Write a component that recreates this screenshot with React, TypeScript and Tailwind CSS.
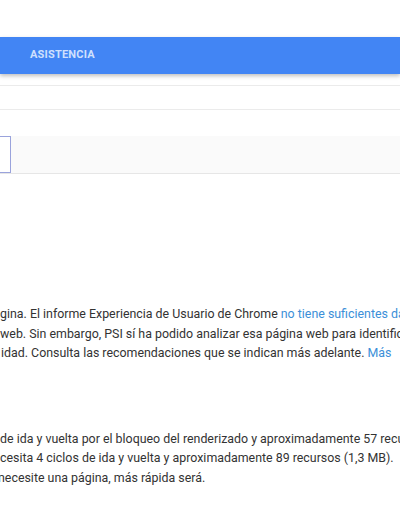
import React from "react";

const link = "text-[#3c8fd8]";

export default function App() {
  return (
    <div className="w-[400px] h-[516px] overflow-hidden bg-white font-['Roboto',sans-serif] text-[#333]">
      <div className="h-[37px]" />
      <div className="h-[37px] bg-[#4285f4] shadow-[0_2px_4px_rgba(0,0,0,0.25)] flex items-center pl-[30px]">
        <span className="text-[11px] font-bold text-[#cfe0fd] tracking-[0.2px]">ASISTENCIA</span>
      </div>
      <div className="h-[11px]" />
      <div className="h-[25px] border-t border-b border-[#ebebeb]" />
      <div className="h-[26px]" />
      <div className="h-[38px] flex bg-[#fafafa] border-b border-[#e6e6e6]">
        <div className="w-[11px] bg-white border-t border-r border-b border-[#9aa3dc]" />
      </div>
      <div className="h-[130px]" />
      <div className="text-[12.4px] leading-[19.5px] whitespace-nowrap">
        <div>
          gina. El informe Experiencia de Usuario de Chrome{" "}
          <span className={link}>no tiene suficientes datos</span>
        </div>
        <div>web. Sin embargo, PSI sí ha podido analizar esa página web para identificar</div>
        <div className="pl-[1px]">
          idad. Consulta las recomendaciones que se indican más adelante.{" "}
          <span className={link}>Más</span>
        </div>
      </div>
      <div className="h-[66px]" />
      <div className="text-[12.4px] leading-[19.5px] whitespace-nowrap">
        <div>de ida y vuelta por el bloqueo del renderizado y aproximadamente 57 recursos</div>
        <div>cesita 4 ciclos de ida y vuelta y aproximadamente 89 recursos (1,3 MB).</div>
        <div className="ml-[-2px]">necesite una página, más rápida será.</div>
      </div>
    </div>
  );
}
